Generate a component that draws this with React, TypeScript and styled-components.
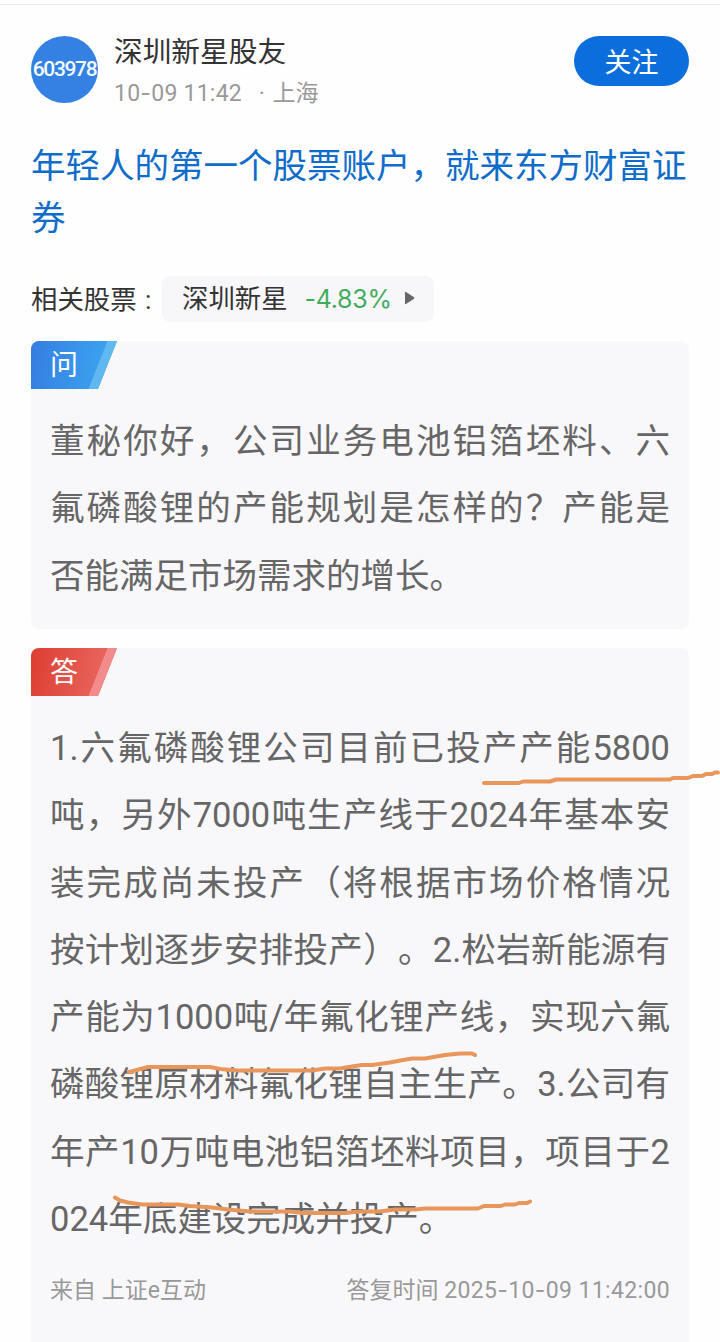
import React from "react";
import styled, { createGlobalStyle } from "styled-components";

const GlobalStyle = createGlobalStyle`
  * { box-sizing: border-box; }
  html, body { margin: 0; padding: 0; background: #fefefe; }
  body {
    font-family: Roboto, "Noto Sans CJK SC", sans-serif;
    text-spacing-trim: space-all;
    text-autospace: no-autospace;
    overflow: hidden;
  }
`;

const Page = styled.main`
  position: relative;
  width: 720px;
  height: 1342px;
  overflow: hidden;
  padding: 0 31px;
  border-top: 4px solid #fefefe;
  display: flex;
  flex-direction: column;
  &::before {
    content: "";
    flex: none;
    height: 1px;
    margin: 0 -31px;
    background: #e9e9e9;
  }
`;

const Header = styled.header`
  display: flex;
  align-items: flex-start;
  flex: none;
  height: 135px;
  padding-top: 31px;
`;

const Avatar = styled.div`
  display: flex;
  justify-content: center;
  width: 67px;
  height: 67px;
  border-radius: 50%;
  background: #3480e3;
  color: #f2fbff;
  font-size: 21px;
  font-weight: 500;
  letter-spacing: -1.35px;
  line-height: 66px;
  white-space: nowrap;
`;

const Author = styled.div`
  flex: 1;
  padding-left: 16px;
`;

const Name = styled.div`
  font-size: 28.7px;
  line-height: 32px;
  color: #333;
`;

const Meta = styled.div`
  margin-top: 10px;
  font-size: 23px;
  line-height: 30px;
  color: #999;
  white-space: pre;
`;

const Stamp = styled.span<{ $gap: number }>`
  letter-spacing: ${(p) => p.$gap}px;
`;

const Dash = styled.span`
  font-family: Inter, sans-serif;
`;

const Place = styled.span`
  margin-left: 9px;
  word-spacing: 2px;
`;

const FollowButton = styled.button`
  width: 115px;
  height: 50px;
  padding: 4px 0 0;
  border: 0;
  border-radius: 25px;
  background: #0b6edc;
  color: #fff;
  font: 400 27px/46px Roboto, "Noto Sans CJK SC", sans-serif;
`;

const Promo = styled.h1`
  flex: none;
  margin: 0;
  height: 136px;
  font-size: 34.5px;
  line-height: 52px;
  font-weight: 400;
  color: #0f6cca;
  word-break: break-all;
`;

const Related = styled.div`
  display: flex;
  flex: none;
  height: 46px;
  line-height: 48px;
  font-size: 26.4px;
  color: #333;
`;

const RelatedLabel = styled.span`
  width: 131px;
  white-space: pre;
  word-spacing: 2px;
`;

const StockChip = styled.div`
  display: flex;
  align-items: center;
  width: 272px;
  height: 46px;
  padding-left: 20px;
  border-radius: 8px;
  background: #f7f7fa;
`;

const Change = styled.span`
  margin-left: 17px;
  width: 86px;
  font-family: Inter, sans-serif;
  font-size: 25px;
  letter-spacing: -0.3px;
  color: #41ac5e;
`;

const Arrow = styled.svg`
  width: 11px;
  height: 14px;
  margin-left: 13px;
  margin-top: -2px;
`;

const Card = styled.section<{ $height: number }>`
  flex: none;
  height: ${(p) => p.$height}px;
  margin-top: 19px;
  border-radius: 8px;
  background: #f8f8fa;
  overflow: hidden;
`;

const Tag = styled.div<{ $from: string; $to: string; $edge: string }>`
  width: 86px;
  height: 48px;
  padding-left: 19px;
  clip-path: polygon(0 0, 86px 0, 67px 48px, 0 48px);
  background:
    linear-gradient(111.6deg, transparent 70.9px, ${(p) => p.$edge} 71.4px),
    linear-gradient(100deg, ${(p) => p.$from}, ${(p) => p.$to} 85%);
  color: #fff;
  font-size: 28px;
  line-height: 49px;
`;

const Lines = styled.div`
  padding: 19px 19px 0;
  font-size: 34.5px;
  line-height: 67.3px;
  color: #666;
`;

const Line = styled.div<{ $last?: boolean }>`
  white-space: nowrap;
  text-align: justify;
  text-align-last: ${(p) => (p.$last ? "left" : "justify")};
`;

const Source = styled.footer`
  display: flex;
  justify-content: space-between;
  padding: 22px 19px 0;
  font-size: 23px;
  line-height: 31px;
  color: #999;
  white-space: nowrap;
`;

const Marker = styled.svg`
  position: absolute;
  left: 0;
  top: -4px;
  width: 720px;
  height: 1342px;
  pointer-events: none;
`;

const question = [
  "董秘你好，公司业务电池铝箔坯料、六",
  "氟磷酸锂的产能规划是怎样的？产能是",
  "否能满足市场需求的增长。",
];

const answer = [
  "1.六氟磷酸锂公司目前已投产产能5800",
  "吨，另外7000吨生产线于2024年基本安",
  "装完成尚未投产（将根据市场价格情况",
  "按计划逐步安排投产）。2.松岩新能源有",
  "产能为1000吨/年氟化锂产线，实现六氟",
  "磷酸锂原材料氟化锂自主生产。3.公司有",
  "年产10万吨电池铝箔坯料项目，项目于2",
  "024年底建设完成并投产。",
];

const strokes = [
  "M484 783H519L523 781.500H550L556 779.500H670L673 778H688L693 776H702L706 774H712L715 772.500H718",
  "M129 1072L137 1070L148 1067H210L220 1069L237 1070.500H312L325 1068.500H340L352 1066.500L362 1065H372L390 1062.500L403 1060L412 1058.500H425L445 1055L460 1053.500H472L475 1055",
  "M115 1197.500L120 1200.500L128 1202.500L142 1204.500H178L190 1206L212 1207.500L228 1209.500L250 1211.500H290L302 1213H345L360 1211.500H380L395 1209.500H415L425 1208.500H478L484 1206H501L505 1204.500H515L519 1203H527L530 1201.500",
];

function TextLines({ lines }: { lines: string[] }) {
  return (
    <Lines>
      {lines.map((text, i) => (
        <Line key={text} $last={i === lines.length - 1}>{text}</Line>
      ))}
    </Lines>
  );
}

export default function App() {
  return (
    <>
      <GlobalStyle />
      <Page>
        <Header>
          <Avatar>603978</Avatar>
          <Author>
            <Name>深圳新星股友</Name>
            <Meta>
              <Stamp $gap={0.25}>10<Dash>-</Dash>09 11:42</Stamp>
              <Place> · 上海</Place>
            </Meta>
          </Author>
          <FollowButton>关注</FollowButton>
        </Header>
        <Promo>年轻人的第一个股票账户，就来东方财富证券</Promo>
        <Related>
          <RelatedLabel>相关股票 :</RelatedLabel>
          <StockChip>
            <span>深圳新星</span>
            <Change>-4.83%</Change>
            <Arrow viewBox="0 0 11 14">
              <path d="M1 1.500Q1 .5 2 1L10 6.300Q10.800 7 10 7.700L2 13Q1 13.500 1 12.500Z" fill="#666" />
            </Arrow>
          </StockChip>
        </Related>
        <Card $height={288}>
          <Tag $from="#357de0" $to="#3ba3f0" $edge="#60b8f1">问</Tag>
          <TextLines lines={question} />
        </Card>
        <Card $height={720}>
          <Tag $from="#dd3e31" $to="#e8665f" $edge="#f28b8b">答</Tag>
          <TextLines lines={answer} />
          <Source>
            <span>来自 上证e互动</span>
            <span>
              答复时间 <Stamp $gap={0.36}>2025<Dash>-</Dash>10<Dash>-</Dash>09 11:42:00</Stamp>
            </span>
          </Source>
        </Card>
        <Marker viewBox="0 0 720 1342" fill="none" stroke="#e8965a" strokeWidth="4" strokeLinecap="round" strokeLinejoin="round">
          {strokes.map((d) => <path key={d} d={d} />)}
        </Marker>
      </Page>
    </>
  );
}
